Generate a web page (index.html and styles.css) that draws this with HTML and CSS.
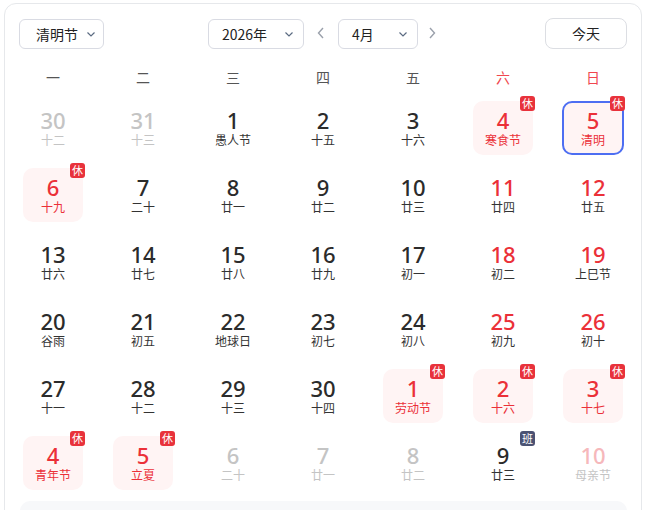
FILE: index.html
```html
<!DOCTYPE html>
<html lang="zh">
<head>
<meta charset="utf-8">
<link rel="stylesheet" href="styles.css">
</head>
<body>
<div class="card">
  <div class="controls">
    <div class="left">
      <div class="select sel-fest"><span>清明节</span><svg class="chev" viewBox="0 0 12 12"><path d="M2.5 4.5 L6 8 L9.5 4.5"/></svg></div>
    </div>
    <div class="center">
      <div class="select sel-year"><span>2026年</span><svg class="chev" viewBox="0 0 12 12"><path d="M2.5 4.5 L6 8 L9.5 4.5"/></svg></div>
      <svg class="arrow" viewBox="0 0 12 16"><path d="M8 3 L3.5 8 L8 13"/></svg>
      <div class="select sel-month"><span>4月</span><svg class="chev" viewBox="0 0 12 12"><path d="M2.5 4.5 L6 8 L9.5 4.5"/></svg></div>
      <svg class="arrow next" viewBox="0 0 12 16"><path d="M4 3 L8.5 8 L4 13"/></svg>
    </div>
    <div class="right">
      <button class="today">今天</button>
    </div>
  </div>
  <div class="weekdays">
    <div>一</div><div>二</div><div>三</div><div>四</div><div>五</div><div class="we">六</div><div class="we">日</div>
  </div>
  <div class="grid">
    <div class="cell other"><div class="num">30</div><div class="lun">十二</div></div>
    <div class="cell other"><div class="num">31</div><div class="lun">十三</div></div>
    <div class="cell"><div class="num">1</div><div class="lun">愚人节</div></div>
    <div class="cell"><div class="num">2</div><div class="lun">十五</div></div>
    <div class="cell"><div class="num">3</div><div class="lun">十六</div></div>
    <div class="cell rest"><div class="num">4</div><div class="lun">寒食节</div><span class="badge">休</span></div>
    <div class="cell rest selected"><div class="num">5</div><div class="lun">清明</div><span class="badge">休</span></div>

    <div class="cell rest"><div class="num">6</div><div class="lun">十九</div><span class="badge">休</span></div>
    <div class="cell"><div class="num">7</div><div class="lun">二十</div></div>
    <div class="cell"><div class="num">8</div><div class="lun">廿一</div></div>
    <div class="cell"><div class="num">9</div><div class="lun">廿二</div></div>
    <div class="cell"><div class="num">10</div><div class="lun">廿三</div></div>
    <div class="cell wk"><div class="num">11</div><div class="lun">廿四</div></div>
    <div class="cell wk"><div class="num">12</div><div class="lun">廿五</div></div>

    <div class="cell"><div class="num">13</div><div class="lun">廿六</div></div>
    <div class="cell"><div class="num">14</div><div class="lun">廿七</div></div>
    <div class="cell"><div class="num">15</div><div class="lun">廿八</div></div>
    <div class="cell"><div class="num">16</div><div class="lun">廿九</div></div>
    <div class="cell"><div class="num">17</div><div class="lun">初一</div></div>
    <div class="cell wk"><div class="num">18</div><div class="lun">初二</div></div>
    <div class="cell wk"><div class="num">19</div><div class="lun">上巳节</div></div>

    <div class="cell"><div class="num">20</div><div class="lun">谷雨</div></div>
    <div class="cell"><div class="num">21</div><div class="lun">初五</div></div>
    <div class="cell"><div class="num">22</div><div class="lun">地球日</div></div>
    <div class="cell"><div class="num">23</div><div class="lun">初七</div></div>
    <div class="cell"><div class="num">24</div><div class="lun">初八</div></div>
    <div class="cell wk"><div class="num">25</div><div class="lun">初九</div></div>
    <div class="cell wk"><div class="num">26</div><div class="lun">初十</div></div>

    <div class="cell"><div class="num">27</div><div class="lun">十一</div></div>
    <div class="cell"><div class="num">28</div><div class="lun">十二</div></div>
    <div class="cell"><div class="num">29</div><div class="lun">十三</div></div>
    <div class="cell"><div class="num">30</div><div class="lun">十四</div></div>
    <div class="cell rest"><div class="num">1</div><div class="lun">劳动节</div><span class="badge">休</span></div>
    <div class="cell rest"><div class="num">2</div><div class="lun">十六</div><span class="badge">休</span></div>
    <div class="cell rest"><div class="num">3</div><div class="lun">十七</div><span class="badge">休</span></div>

    <div class="cell rest"><div class="num">4</div><div class="lun">青年节</div><span class="badge">休</span></div>
    <div class="cell rest"><div class="num">5</div><div class="lun">立夏</div><span class="badge">休</span></div>
    <div class="cell other"><div class="num">6</div><div class="lun">二十</div></div>
    <div class="cell other"><div class="num">7</div><div class="lun">廿一</div></div>
    <div class="cell other"><div class="num">8</div><div class="lun">廿二</div></div>
    <div class="cell"><div class="num">9</div><div class="lun">廿三</div><span class="badge work">班</span></div>
    <div class="cell other otherwk"><div class="num">10</div><div class="lun">母亲节</div></div>
  </div>
  <div class="panel"></div>
</div>
</body>
</html>
```
FILE: styles.css
```css
* { box-sizing: border-box; }
html, body { margin: 0; padding: 0; background: #fff; }
body {
  font-family: "Noto Sans", "Noto Sans CJK SC", sans-serif;
  color: #333;
  width: 648px;
  height: 510px;
  overflow: hidden;
}
.card {
  margin: 3px 0 0 4px;
  width: 638px;
  height: 540px;
  border: 1px solid #e6e8eb;
  border-radius: 12px;
  padding: 13px 0 0 0;
}
.controls {
  display: grid;
  grid-template-columns: 1fr auto 1fr;
  align-items: center;
  padding: 0 14px 0 14px;
  height: 32px;
}
.left { display: flex; }
.right { display: flex; justify-content: flex-end; }
.center { display: flex; align-items: center; }
.select {
  height: 30px;
  border: 1px solid #d9dbe3;
  border-radius: 6px;
  display: flex;
  align-items: center;
  justify-content: space-between;
  font-family: "Noto Sans CJK SC", sans-serif;
  font-size: 14px;
  color: #222;
  margin-top: 1px;
}
.sel-fest { width: 85px; padding: 0 6px 0 16px; }
.sel-year { width: 96px; padding: 0 8px 0 13px; }
.sel-month { width: 80px; padding: 0 8px 0 13px; }
.chev { width: 12px; height: 12px; }
.chev path { fill: none; stroke: #5b6b82; stroke-width: 1.2; }
.arrow { width: 12px; height: 16px; margin: 0 11px; }
.arrow.next { margin: 0 0 0 8px; }
.arrow path { fill: none; stroke: #9aa0ab; stroke-width: 1.4; }
.today {
  width: 82px;
  height: 31px;
  border: 1px solid #dcdee3;
  border-radius: 8px;
  background: #fff;
  font-family: "Noto Sans CJK SC", sans-serif;
  font-size: 14px;
  color: #222;
  padding: 0;
}
.weekdays {
  display: grid;
  grid-template-columns: repeat(7, 90px);
  margin: 13px 0 0 3px;
  height: 30px;
  align-items: center;
  font-family: "Noto Sans CJK SC", sans-serif;
  font-size: 14px;
  color: #555;
  text-align: center;
}
.weekdays .we { color: #f0474f; }
.grid {
  display: grid;
  grid-template-columns: repeat(7, 90px);
  grid-auto-rows: 54px;
  row-gap: 13px;
  margin: 9px 0 0 3px;
  justify-items: center;
}
.cell {
  position: relative;
  width: 60px;
  height: 54px;
  border-radius: 10px;
  text-align: center;
  padding-top: 7px;
}
.num {
  font-family: "Noto Sans", sans-serif;
  font-size: 22px;
  font-weight: 500;
  line-height: 24px;
  color: #2b2b2b;
}
.lun {
  font-family: "Noto Sans CJK SC", sans-serif;
  font-size: 12px;
  line-height: 15px;
  color: #333;
}
.wk .num { color: #eb3038; }
.other .num { color: #c4c4c4; }
.other .lun { color: #c4c4c4; }
.otherwk .num { color: #f6b8bb; }
.rest { background: #fff4f4; }
.rest .num, .rest .lun { color: #eb3038; }
.selected {
  width: 62px;
  border: 2px solid #4d6ef2;
  padding-top: 5px;
}
.badge {
  position: absolute;
  top: -5px;
  right: -2px;
  width: 15px;
  height: 15px;
  border-radius: 3px;
  background: #e8323b;
  color: #fff;
  font-family: "Noto Sans CJK SC", sans-serif;
  font-size: 11px;
  line-height: 15px;
  text-align: center;
}
.selected .badge { top: -7px; right: -3px; }
.badge.work { background: #4b5273; }
.panel {
  margin: 11px 0 0 15px;
  width: 607px;
  height: 40px;
  background: #f7f8fa;
  border-radius: 10px;
}
```
